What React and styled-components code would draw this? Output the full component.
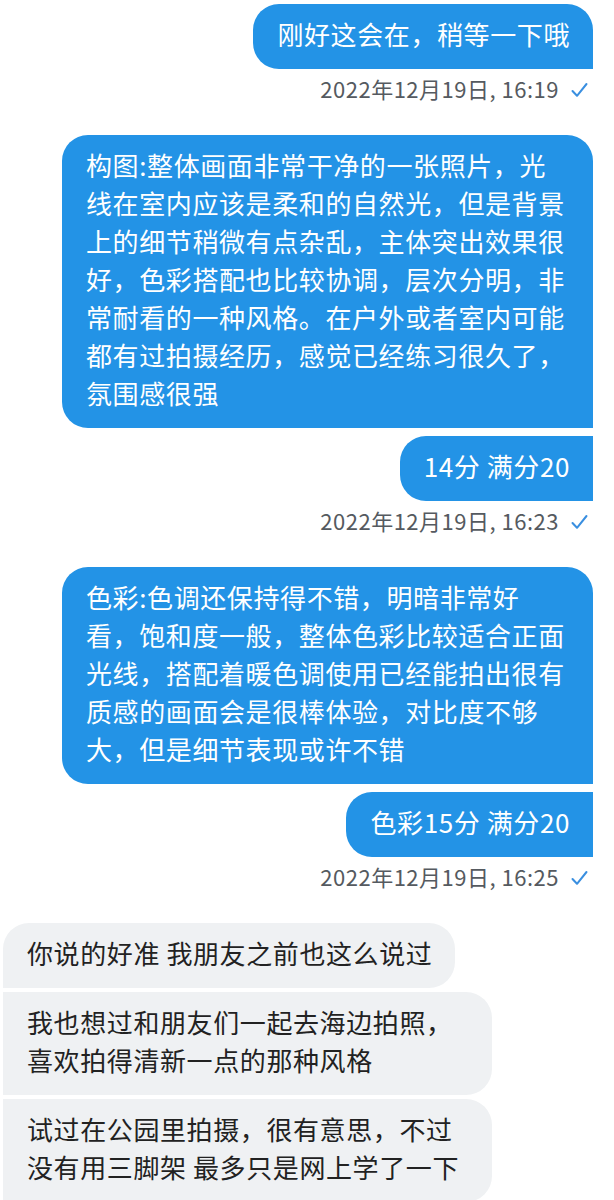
import React from 'react'
import styled, { createGlobalStyle } from 'styled-components';

const GlobalStyle = createGlobalStyle`
   body{
      margin:0;
      background:#ffffff;
      font-family:"Noto Sans CJK SC", "Noto Sans", sans-serif;
   }
`;

const StyledChat = styled.main`
   display:flex;
   flex-direction:column;
   width:614px;
   padding:4px 0 0 0;
   box-sizing:border-box;
`;

const StyledGroup = styled.section`
   display:flex;
   flex-direction:column;
   align-items:${({ $mine }) => $mine ? 'flex-end' : 'flex-start'};
   gap:${({ $mine }) => $mine ? '8px' : '4px'};
   padding:${({ $mine }) => $mine ? '0 21px 0 0' : '0 0 0 3px'};
   margin-bottom:${({ $last }) => $last ? '0' : '35px'};
`;

const StyledBubble = styled.div`
   box-sizing:border-box;
   max-width:${({ $mine }) => $mine ? '531px' : '489px'};
   padding:11px 23px 16px 24px;
   font-size:26px;
   letter-spacing:0.6px;
   line-height:38px;
   font-family:"Noto Sans CJK SC", "Noto Sans", sans-serif;
   color:${({ $mine }) => $mine ? '#ffffff' : '#222222'};
   background:${({ $mine }) => $mine ? '#2393e6' : '#eff1f3'};
   border-radius:${({ $mine, $first }) => {
      const big = '26px';
      return $mine
         ? `${big} ${$first ? big : '0'} 0 ${big}`
         : `${$first ? big : '0'} ${big} ${big} 0`;
   }};
`;

const StyledMeta = styled.div`
   display:flex;
   align-items:center;
   gap:12px;
   margin-top:-1px;
   height:24px;
   font-size:22px;
   letter-spacing:0.5px;
   color:#555a60;
   font-family:"Noto Sans CJK SC", "Noto Sans", sans-serif;
   svg{
      margin:4px 5px 0 0;
   }
`;

const Check = () => (
   <svg width="17" height="16" viewBox="0 0 17 16">
      <path d="M1.5 9 L6 13.8 L15.5 2" fill="none" stroke="#3a8fe0" strokeWidth="2" strokeLinecap="round" strokeLinejoin="round" />
   </svg>
);

const chat = [
   {
      mine: true,
      messages: ['刚好这会在，稍等一下哦'],
      time: '2022年12月19日, 16:19'
   },
   {
      mine: true,
      messages: [
         '构图:整体画面非常干净的一张照片，光线在室内应该是柔和的自然光，但是背景上的细节稍微有点杂乱，主体突出效果很好，色彩搭配也比较协调，层次分明，非常耐看的一种风格。在户外或者室内可能都有过拍摄经历，感觉已经练习很久了，氛围感很强',
         '14分 满分20'
      ],
      time: '2022年12月19日, 16:23'
   },
   {
      mine: true,
      messages: [
         '色彩:色调还保持得不错，明暗非常好看，饱和度一般，整体色彩比较适合正面光线，搭配着暖色调使用已经能拍出很有质感的画面会是很棒体验，对比度不够大，但是细节表现或许不错',
         '色彩15分 满分20'
      ],
      time: '2022年12月19日, 16:25'
   },
   {
      mine: false,
      messages: [
         '你说的好准 我朋友之前也这么说过',
         '我也想过和朋友们一起去海边拍照，喜欢拍得清新一点的那种风格',
         '试过在公园里拍摄，很有意思，不过没有用三脚架 最多只是网上学了一下'
      ]
   }
];

const App = () => {
   return (
      <>
         <GlobalStyle />
         <StyledChat>
            {chat.map((group, g) => (
               <StyledGroup key={g} $mine={group.mine} $last={g === chat.length - 1}>
                  {group.messages.map((text, i) => (
                     <StyledBubble key={i} $mine={group.mine} $first={i === 0}>
                        {text}
                     </StyledBubble>
                  ))}
                  {group.time && (
                     <StyledMeta>
                        <span>{group.time}</span>
                        <Check />
                     </StyledMeta>
                  )}
               </StyledGroup>
            ))}
         </StyledChat>
      </>
   )
}

export default App
